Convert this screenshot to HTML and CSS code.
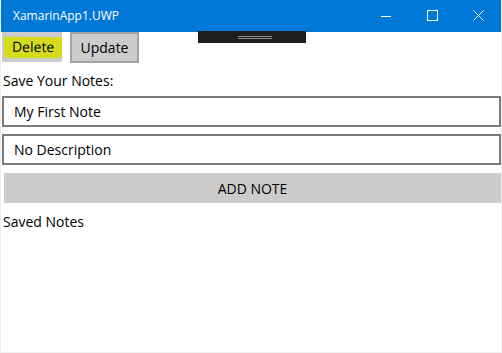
FILE: index.html
```html
<!DOCTYPE html>
<html>
<head>
<meta charset="utf-8">
<link rel="stylesheet" href="styles.css">
</head>
<body>
<div class="window">
  <div class="titlebar">
    <span class="title">XamarinApp1.UWP</span>
    <div class="caption">
      <span class="cbtn"><svg width="10" height="10" viewBox="0 0 10 10"><path d="M0 5.5H10" stroke="#fff" stroke-width="1"/></svg></span>
      <span class="cbtn"><svg width="11" height="11" viewBox="0 0 11 11"><rect x="0.5" y="0.5" width="10" height="10" fill="none" stroke="#fff" stroke-width="1"/></svg></span>
      <span class="cbtn"><svg width="11" height="11" viewBox="0 0 11 11"><path d="M0.5 0.5L10.5 10.5M10.5 0.5L0.5 10.5" stroke="#fff" stroke-width="1"/></svg></span>
    </div>
  </div>
  <div class="grip"><span class="grip-lines"></span></div>
  <div class="content">
    <div class="toolbar">
      <button class="btn btn-delete"><span class="mark">Delete</span></button>
      <button class="btn btn-update">Update</button>
    </div>
    <div class="label label-save">Save Your Notes:</div>
    <div class="entry">My First Note</div>
    <div class="entry">No Description</div>
    <button class="add">ADD NOTE</button>
    <div class="label label-saved">Saved Notes</div>
  </div>
</div>
</body>
</html>
```
FILE: styles.css
```css
html, body {
  margin: 0;
  padding: 0;
  background: #fff;
}
body {
  font-family: "Open Sans", "Noto Sans", sans-serif;
  color: #000;
}
.window {
  width: 502px;
  height: 353px;
  box-sizing: border-box;
  border: 1px solid #f0f0f0;
  border-top: none;
  position: relative;
  overflow: hidden;
}
.titlebar {
  height: 32px;
  background: #0078d7;
  margin: 0 -1px;
  display: flex;
  align-items: center;
  justify-content: space-between;
}
.title {
  color: #fff;
  font-size: 12px;
  padding-left: 13px;
  padding-bottom: 2px;
}
.caption {
  display: flex;
  height: 100%;
  margin-right: 1px;
}
.cbtn {
  width: 46px;
  display: flex;
  align-items: center;
  justify-content: center;
  padding-bottom: 1px;
}
.grip {
  position: absolute;
  left: 197px;
  top: 31px;
  width: 108px;
  height: 12px;
  background: #1e1e1e;
  display: flex;
  align-items: center;
  justify-content: center;
}
.grip-lines {
  width: 34px;
  height: 1px;
  border-top: 1px solid #8a8a8a;
  border-bottom: 1px solid #8a8a8a;
  margin-left: 6px;
}
.content {
  padding: 0 1px 0 1px;
}
.toolbar {
  display: flex;
  gap: 8px;
  height: 31px;
}
.btn {
  font-family: inherit;
  font-size: 14px;
  color: #000;
  background: #cccccc;
  box-sizing: border-box;
  height: 31px;
  margin: 0;
  padding: 0;
}
.btn-delete {
  width: 60px;
  border: none;
  height: 30px;
  display: flex;
  align-items: center;
  justify-content: flex-end;
}
.mark {
  display: block;
  background: #d6dc1a;
  width: 58px;
  box-sizing: border-box;
  padding: 1px 0 3px 8px;
  text-align: left;
  line-height: 17px;
  transform: rotate(0.5deg);
  border-radius: 1px 0 3px 2px;
}
.btn-update {
  width: 69px;
  border: 2px solid #a3a3a3;
}
.label {
  font-size: 14px;
  padding-left: 1px;
}
.label-save {
  margin-top: 8px;
  height: 22px;
}
.entry {
  box-sizing: border-box;
  height: 31px;
  border: 2px solid #7a7a7a;
  margin: 3px 0 0 0;
  padding: 4px 0 0 10px;
  font-size: 14px;
  width: 499px;
}
.entry + .entry {
  margin-top: 7px;
}
.add {
  display: block;
  box-sizing: border-box;
  width: 497px;
  height: 30px;
  margin: 8px 0 0 2px;
  background: #cccccc;
  border: none;
  font-family: inherit;
  font-size: 14px;
  color: #000;
  padding: 0;
}
.label-saved {
  margin-top: 9px;
}
```
